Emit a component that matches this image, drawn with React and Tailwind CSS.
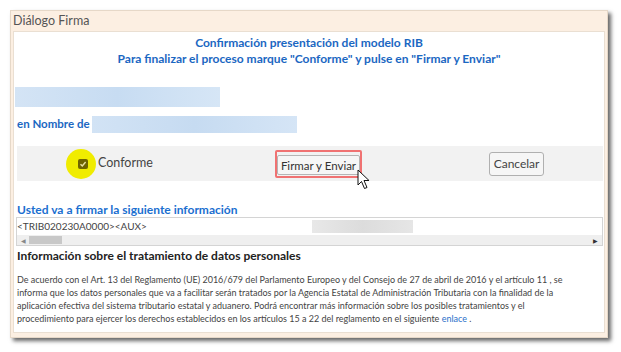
import React from 'react';

const FONT = { fontFamily: 'Lato, "Open Sans", sans-serif' };

function Cursor() {
  return (
    <svg width="14" height="21" viewBox="0 0 14 21" className="absolute left-[357px] top-[169px]">
      <path d="M1 1 L1 16 L4.5 12.5 L7.5 19.5 L10 18.5 L7 11.5 L12 11.5 Z" fill="#fff" stroke="#111" strokeWidth="1" strokeLinejoin="round" />
    </svg>
  );
}

export default function App() {
  return (
    <div className="relative w-[621px] h-[352px] bg-white" style={FONT}>
      <div className="absolute left-[10px] top-[10px] w-[598px] h-[328px] bg-[#fcefe2] border border-[#e6d8c8] shadow-[3px_3px_4px_rgba(0,0,0,0.6)] flex flex-col">
        <div className="h-[20px] pl-[2px] flex items-center text-[12.5px] text-[#555]">Diálogo Firma</div>
        <div className="mx-[2px] flex-1 mb-[4px] bg-white border border-[#eadfd2] flex flex-col">
          <div className="pt-[3px] text-center font-bold text-[12px] leading-[16px] text-[#1b67c2]">
            <div>Confirmación presentación del modelo RIB</div>
            <div>Para finalizar el proceso marque "Conforme" y pulse en "Firmar y Enviar"</div>
          </div>

          <div className="mt-[20px] ml-[1px] h-[20px] w-[205px] bg-gradient-to-r from-[#d4e4f5] via-[#c7dcf2] to-[#d6e6f6]" />

          <div className="mt-[8px] ml-[3px] h-[18px] flex items-center">
            <span className="font-bold text-[11.5px] text-[#1b67c2]">en Nombre de</span>
            <div className="ml-[2px] h-[17px] w-[205px] bg-gradient-to-r from-[#d2e3f5] via-[#c6dbf1] to-[#d5e5f6]" />
          </div>

          <div className="mt-[13px] ml-[3px] mr-[1px] h-[35px] bg-[#f2f2f2] flex items-center">
            <div className="ml-[49px] w-[30px] h-[30px] rounded-full bg-[#f0ec00] flex items-center justify-center">
              <div className="ml-[4px] w-[10px] h-[10px] rounded-[2px] bg-[#6e6300] flex items-center justify-center">
                <svg width="8" height="8" viewBox="0 0 8 8">
                  <path d="M1.5 4.2 L3.3 6 L6.6 2" fill="none" stroke="#e8e2a0" strokeWidth="1.4" />
                </svg>
              </div>
            </div>
            <span className="ml-[2px] text-[12.5px] text-[#444]">Conforme</span>
            <div className="ml-[122px] border-2 border-[#f07272] rounded-[2px]">
              <button className="h-[20px] px-[3px] bg-[#f6f6f6] border border-[#b5b5b5] rounded-[2px] text-[11.5px] text-[#333] leading-none">Firmar y Enviar</button>
            </div>
            <button className="ml-[127px] h-[24px] w-[55px] bg-[#f6f6f6] border border-[#b0b0b0] rounded-[3px] text-[12px] text-[#444] leading-none">Cancelar</button>
          </div>

          <div className="mt-[21px] ml-[3px] h-[15px] leading-[15px] font-bold text-[12px] text-[#1b6fd0]">Usted va a firmar la siguiente información</div>

          <div className="ml-[2px] mr-[1px] h-[29px] border border-[#d4d4d4] flex flex-col">
            <div className="h-[17px] flex items-center text-[10px] text-[#444]">
              <span>&lt;TRIB020230A0000&gt;&lt;AUX&gt;</span>
              <div className="ml-[165px] h-[13px] w-[101px] bg-gradient-to-r from-[#e8e8e8] via-[#dcdcdc] to-[#e6e6e6]" />
            </div>
            <div className="flex-1 bg-[#efefef] flex items-center px-[4px]">
              <span className="text-[6px] text-[#888]">◀</span>
              <div className="ml-[3px] w-[33px] h-[8px] bg-[#c8c8c8]" />
              <div className="flex-1" />
              <span className="text-[6px] text-[#333]">▶</span>
            </div>
          </div>

          <div className="mt-[2px] ml-[3px] h-[16px] leading-[16px] font-bold text-[12px] text-[#222]">Información sobre el tratamiento de datos personales</div>

          <div className="mt-[9px] ml-[3px] text-[9px] leading-[13px] text-[#444] whitespace-nowrap">
            De acuerdo con el Art. 13 del Reglamento (UE) 2016/679 del Parlamento Europeo y del Consejo de 27 de abril de 2016 y el artículo 11 , se<br />
            informa que los datos personales que va a facilitar serán tratados por la Agencia Estatal de Administración Tributaria con la finalidad de la<br />
            aplicación efectiva del sistema tributario estatal y aduanero. Podrá encontrar más información sobre los posibles tratamientos y el<br />
            procedimiento para ejercer los derechos establecidos en los artículos 15 a 22 del reglamento en el siguiente <span className="text-[#2a6fc9]">enlace</span> .
          </div>
        </div>
      </div>
      <Cursor />
    </div>
  );
}
